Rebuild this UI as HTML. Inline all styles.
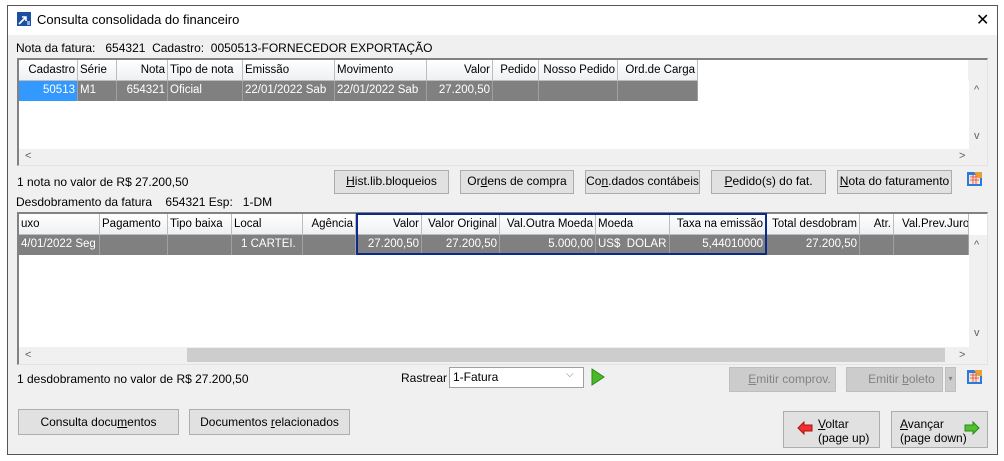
<!DOCTYPE html>
<html><head><meta charset="utf-8"><style>
*{box-sizing:border-box;margin:0;padding:0}
body{width:1004px;height:461px;background:#fff;font-family:"Liberation Sans",sans-serif;font-size:12px;color:#000;position:relative;overflow:hidden}
.a{position:absolute;white-space:nowrap}
.win{position:absolute;left:7px;top:5px;width:991px;height:450px;border:1px solid #555;background:#f0f0f0}
.title{position:absolute;left:8px;top:6px;width:989px;height:29px;background:#fff}
.grid{position:absolute;background:#fff;border-left:2px solid #828282;border-top:2px solid #828282;border-right:1px solid #e3e3e3;border-bottom:1px solid #e3e3e3}
.h{position:absolute;height:21px;line-height:20px;background:linear-gradient(#fff,#eef0f3);border-right:1px solid #bdbdbd;border-bottom:1px solid #bdbdbd;padding:0 2px;overflow:hidden;white-space:nowrap;font-size:11.5px}
.d{position:absolute;height:20px;line-height:19px;background:#808080;color:#fff;border-right:1px solid #a0a0a0;padding:0 2px;overflow:hidden;white-space:nowrap;font-size:11.5px}
.r{text-align:right}
.btn{position:absolute;background:#e1e1e1;border:1px solid #adadad;text-align:center;line-height:21px;white-space:nowrap}
.dis{color:#838383;background:#cccccc;border-color:#bfbfbf}
.sb{position:absolute;background:#f0f0f0;color:#606060;font-size:11px}
u{text-decoration:underline}
</style></head><body>
<div class="win"></div>
<div class="title"></div>
<svg class="a" style="left:17px;top:12px" width="14" height="14"><rect width="14" height="14" fill="#1c4fa0"/><path d="M2 12 L9 5 M5 5 H9 V9" stroke="#fff" stroke-width="1.6" fill="none"/><rect x="10" y="9" width="3" height="4" fill="#8fb0e0"/></svg>
<div class="a" style="left:37px;top:12px;font-size:13px">Consulta consolidada do financeiro</div>
<div class="a" style="left:976px;top:10px;font-size:16px">✕</div>
<div class="a" style="left:16px;top:41px">Nota da fatura:&nbsp;&nbsp; 654321&nbsp; Cadastro:&nbsp; 0050513-FORNECEDOR EXPORTAÇÃO</div>

<div class="grid" style="left:17px;top:58px;width:971px;height:108px"></div>
<div class="a" style="left:968px;top:60px;width:19px;height:20px;background:#f0f0f0"></div>
<div class="h r" style="left:19px;top:60px;width:59px">Cadastro</div>
<div class="h" style="left:78px;top:60px;width:39px">Série</div>
<div class="h r" style="left:117px;top:60px;width:51px">Nota</div>
<div class="h" style="left:168px;top:60px;width:75px">Tipo de nota</div>
<div class="h" style="left:243px;top:60px;width:92px">Emissão</div>
<div class="h" style="left:335px;top:60px;width:92px">Movimento</div>
<div class="h r" style="left:427px;top:60px;width:66px">Valor</div>
<div class="h r" style="left:493px;top:60px;width:46px">Pedido</div>
<div class="h r" style="left:539px;top:60px;width:79px">Nosso Pedido</div>
<div class="h r" style="left:618px;top:60px;width:80px">Ord.de Carga</div>
<div class="d r" style="left:19px;top:81px;width:59px;background:#3399ff">50513</div>
<div class="d" style="left:78px;top:81px;width:39px">M1</div>
<div class="d r" style="left:117px;top:81px;width:51px">654321</div>
<div class="d" style="left:168px;top:81px;width:75px">Oficial</div>
<div class="d" style="left:243px;top:81px;width:92px">22/01/2022 Sab</div>
<div class="d" style="left:335px;top:81px;width:92px">22/01/2022 Sab</div>
<div class="d r" style="left:427px;top:81px;width:66px">27.200,50</div>
<div class="d" style="left:493px;top:81px;width:46px"></div>
<div class="d" style="left:539px;top:81px;width:79px"></div>
<div class="d" style="left:618px;top:81px;width:80px"></div>
<div class="sb" style="left:969px;top:80px;width:18px;height:69px"><span class="a" style="left:5px;top:4px">^</span><span class="a" style="left:5px;top:50px">v</span></div>
<div class="sb" style="left:19px;top:149px;width:968px;height:16px"><span class="a" style="left:6px;top:1px">&lt;</span><span class="a" style="left:940px;top:1px">&gt;</span></div>

<div class="a" style="left:17px;top:175px">1 nota no valor de R$ 27.200,50</div>
<div class="btn" style="left:334px;top:170px;width:115px;height:24px"><u>H</u>ist.lib.bloqueios</div>
<div class="btn" style="left:460px;top:170px;width:114px;height:24px">Or<u>d</u>ens de compra</div>
<div class="btn" style="left:585px;top:170px;width:115px;height:24px">Co<u>n</u>.dados contábeis</div>
<div class="btn" style="left:711px;top:170px;width:115px;height:24px"><u>P</u>edido(s) do fat.</div>
<div class="btn" style="left:837px;top:170px;width:115px;height:24px"><u>N</u>ota do faturamento</div>
<svg class="a" style="left:966px;top:170px" width="17" height="17"><rect x="1" y="2" width="15" height="14" fill="#2a7be0"/><rect x="3" y="5" width="11" height="9" fill="#f7e4d0"/><path d="M4 7h9M4 10h9M7 5v9M10 5v9" stroke="#e04040" stroke-width=".8"/><path d="M8 2h8v6h-4z" fill="#e8a030"/></svg>
<div class="a" style="left:16px;top:195px">Desdobramento da fatura&nbsp;&nbsp;&nbsp; 654321 Esp:&nbsp;&nbsp; 1-DM</div>

<div class="grid" style="left:17px;top:212px;width:971px;height:153px"></div>
<div class="h" style="left:19px;top:214px;width:81px">uxo</div>
<div class="h" style="left:100px;top:214px;width:68px">Pagamento</div>
<div class="h" style="left:168px;top:214px;width:64px">Tipo baixa</div>
<div class="h" style="left:232px;top:214px;width:71px">Local</div>
<div class="h r" style="left:303px;top:214px;width:53px">Agência</div>
<div class="h r" style="left:356px;top:214px;width:66px">Valor</div>
<div class="h r" style="left:422px;top:214px;width:78px">Valor Original</div>
<div class="h r" style="left:500px;top:214px;width:96px">Val.Outra Moeda</div>
<div class="h" style="left:596px;top:214px;width:74px">Moeda</div>
<div class="h r" style="left:670px;top:214px;width:96px">Taxa na emissão</div>
<div class="h r" style="left:766px;top:214px;width:94px">Total desdobram</div>
<div class="h r" style="left:860px;top:214px;width:34px">Atr.</div>
<div class="h" style="left:894px;top:214px;width:75px;padding-left:8px">Val.Prev.Juro</div>
<div class="d" style="left:19px;top:235px;width:81px">4/01/2022 Seg</div>
<div class="d" style="left:100px;top:235px;width:68px"></div>
<div class="d" style="left:168px;top:235px;width:64px"></div>
<div class="d" style="left:232px;top:235px;width:71px;padding-left:9px">1 CARTEI.</div>
<div class="d" style="left:303px;top:235px;width:53px"></div>
<div class="d r" style="left:356px;top:235px;width:66px">27.200,50</div>
<div class="d r" style="left:422px;top:235px;width:78px">27.200,50</div>
<div class="d r" style="left:500px;top:235px;width:96px">5.000,00</div>
<div class="d" style="left:596px;top:235px;width:74px">US$&nbsp; DOLAR</div>
<div class="d r" style="left:670px;top:235px;width:96px">5,44010000</div>
<div class="d r" style="left:766px;top:235px;width:94px">27.200,50</div>
<div class="d" style="left:860px;top:235px;width:34px"></div>
<div class="d" style="left:894px;top:235px;width:75px"></div>
<div class="a" style="left:356px;top:213px;width:411px;height:42px;border:2px solid #0a2a8c"></div>
<div class="sb" style="left:969px;top:235px;width:18px;height:112px"><span class="a" style="left:5px;top:4px">^</span><span class="a" style="left:5px;top:92px">v</span></div>
<div class="sb" style="left:19px;top:347px;width:968px;height:17px"><span class="a" style="left:6px;top:2px">&lt;</span><div class="a" style="left:168px;top:1px;width:758px;height:14px;background:#cdcdcd"></div><span class="a" style="left:940px;top:2px">&gt;</span></div>

<div class="a" style="left:17px;top:372px">1 desdobramento no valor de R$ 27.200,50</div>
<div class="a" style="left:401px;top:371px">Rastrear</div>
<div class="a" style="left:449px;top:367px;width:135px;height:21px;background:#fff;border:1px solid #a0a0a0;padding:2px 3px">1-Fatura<span class="a" style="left:116px;top:1px;color:#777;font-size:10px">⌵</span></div>
<svg class="a" style="left:590px;top:368px" width="16" height="18"><path d="M2 1 L14 9 L2 17 Z" fill="#4cb82c" stroke="#2b8a18"/></svg>
<div class="btn dis" style="left:729px;top:367px;width:107px;height:25px;line-height:23px;padding-left:14px"><u>E</u>mitir comprov.</div>
<div class="btn dis" style="left:846px;top:367px;width:97px;height:25px;line-height:23px;padding-left:14px">Emitir <u>b</u>oleto</div>
<div class="btn dis" style="left:945px;top:367px;width:11px;height:25px;font-size:8px">▾</div>
<svg class="a" style="left:966px;top:368px" width="17" height="17"><rect x="1" y="2" width="15" height="14" fill="#2a7be0"/><rect x="3" y="5" width="11" height="9" fill="#f7e4d0"/><path d="M4 7h9M4 10h9M7 5v9M10 5v9" stroke="#e04040" stroke-width=".8"/><path d="M8 2h8v6h-4z" fill="#e8a030"/></svg>

<div class="btn" style="left:18px;top:409px;width:161px;height:26px;line-height:24px">Consulta docu<u>m</u>entos</div>
<div class="btn" style="left:189px;top:409px;width:161px;height:26px;line-height:24px">Documentos <u>r</u>elacionados</div>
<div class="btn" style="left:783px;top:411px;width:97px;height:37px;line-height:14px;text-align:left;padding:5px 0 0 34px"><u>V</u>oltar<br>(page up)</div>
<svg class="a" style="left:797px;top:421px" width="16" height="14"><path d="M1 7 L7 1 V4 H15 V10 H7 V13 Z" fill="#f03030" stroke="#b01010"/></svg>
<div class="btn" style="left:891px;top:411px;width:97px;height:37px;line-height:14px;text-align:left;padding:5px 0 0 8px"><u>A</u>vançar<br>(page down)</div>
<svg class="a" style="left:964px;top:421px" width="16" height="14"><path d="M15 7 L9 1 V4 H1 V10 H9 V13 Z" fill="#50c030" stroke="#2a8a18"/></svg>
</body></html>
